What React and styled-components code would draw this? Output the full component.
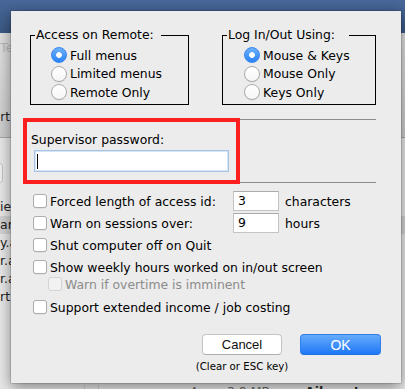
import React from 'react';
import styled, { createGlobalStyle } from 'styled-components';

const GlobalStyle = createGlobalStyle`
  html, body {
    margin: 0;
    padding: 0;
  }
  body {
    font-family: "DejaVu Sans", "Liberation Sans", sans-serif;
  }
`;

const Screen = styled.div`
  position: relative;
  width: 405px;
  height: 389px;
  overflow: hidden;
  display: flex;
  flex-direction: column;
  background: #e8e8e8;
`;

const TitleBar = styled.div`
  flex: none;
  height: 33px;
  background: linear-gradient(#49689a, #3b5884);
`;

const Toolbar = styled.div`
  flex: none;
  height: 105px;
  box-sizing: border-box;
  padding: 7px 0 12px;
  display: flex;
  flex-direction: column;
  justify-content: space-between;
  border-bottom: 1px solid #a8a8a8;
  background: linear-gradient(#e0e0e0, #cdcdcd);
  font-size: 12px;
`;

const ToolHint = styled.div`
  color: #b9b9b9;
  font-size: 13px;
  line-height: 16px;
`;

const ToolLabel = styled.div`
  width: 10px;
  display: flex;
  justify-content: flex-end;
  color: #1e1e1e;
  line-height: 15px;
  white-space: nowrap;
`;

const Body = styled.div`
  flex: 1;
  display: flex;
  flex-direction: column;
`;

const SearchBox = styled.div`
  margin: 24px 0 0 -60px;
  width: 63px;
  height: 22px;
  box-sizing: border-box;
  border: 1px solid #c3c3c3;
  border-radius: 5px;
  background: #f1f1f1;
`;

const List = styled.div`
  margin-top: 14px;
  display: flex;
  flex-direction: column;
`;

const ListRow = styled.div`
  height: 18px;
  line-height: 18px;
  font-size: 12.5px;
  color: #222;
  white-space: nowrap;
  background: ${p => (p.$selected ? '#d3d3d3' : 'transparent')};
`;

const StatusRow = styled.div`
  margin-top: auto;
  margin-bottom: -10px;
  height: 14px;
  display: flex;
  font-size: 12.5px;
  line-height: 14px;
  white-space: nowrap;
`;

const StatusCell = styled.div`
  flex: none;
  box-sizing: border-box;
  width: ${p => p.$w}px;
  padding-left: ${p => p.$pad || 0}px;
  border-right: ${p => (p.$divider ? '1px solid #cfcfcf' : 'none')};
  color: ${p => (p.$strong ? '#2a2a2a' : '#6a6a6a')};
  font-weight: ${p => (p.$strong ? 'bold' : 'normal')};
`;

const Sheet = styled.div`
  position: absolute;
  left: 11px;
  top: 11px;
  width: 390px;
  height: 372px;
  box-sizing: border-box;
  padding: 17px 0 0 19px;
  display: flex;
  flex-direction: column;
  background: #ececec;
  box-shadow: 0 4px 14px rgba(0, 0, 0, 0.45), 0 0 0 0.5px rgba(0, 0, 0, 0.25);
  font-size: 12.4px;
  color: #000;
`;

const Groups = styled.div`
  display: flex;
  gap: 33px;
`;

const Group = styled.fieldset`
  margin: 0;
  padding: 0;
  box-sizing: border-box;
  width: ${p => p.$w}px;
  min-inline-size: 0;
  height: 77px;
  border: 1px solid #000;
`;

const Legend = styled.legend`
  margin-left: 4px;
  padding: 0 ${p => p.$after}px 0 1px;
  line-height: 14px;
`;

const RadioList = styled.div`
  padding: 4px 0 0 ${p => p.$inset}px;
  display: flex;
  flex-direction: column;
`;

const RadioRow = styled.div`
  height: 18.5px;
  display: flex;
  align-items: center;
  gap: 3px;
  white-space: nowrap;
`;

const RadioDot = styled.span`
  flex: none;
  width: 16px;
  height: 16px;
  box-sizing: border-box;
  border-radius: 50%;
  border: 1px solid ${p => (p.$on ? '#3a86ee' : '#ababab')};
  background: ${p =>
    p.$on
      ? 'radial-gradient(circle, #fff 0 2.5px, transparent 3.2px), linear-gradient(#6cb2fb, #2a82f6)'
      : 'linear-gradient(#ffffff, #f6f6f6)'};
  box-shadow: ${p => (p.$on ? 'none' : '0 0.5px 0.5px rgba(0,0,0,0.12)')};
`;

const Separator = styled.div`
  width: 346px;
  height: 1px;
  flex: none;
  margin-top: ${p => p.$top || 0}px;
  background: #8d8d8d;
`;

const PasswordSection = styled.div`
  position: relative;
  height: 62px;
  box-sizing: border-box;
  padding: 12px 0 0 1px;
`;

const Highlight = styled.div`
  position: absolute;
  left: -7px;
  top: -2px;
  width: 217px;
  height: 66px;
  box-sizing: border-box;
  border: 4px solid #fb1f1f;
  pointer-events: none;
`;

const FieldLabel = styled.div`
  line-height: 15px;
`;

const PasswordBox = styled.div`
  margin: 3px 0 0 3px;
  width: 195px;
  height: 22px;
  box-sizing: border-box;
  display: flex;
  align-items: center;
  padding-left: 2px;
  background: #fff;
  border: 1px solid #a6c4e6;
  box-shadow: inset 0 0 0 1px #d6e4f3;
`;

const Caret = styled.span`
  width: 1px;
  height: 15px;
  background: #000;
`;

const CheckList = styled.div`
  padding: 8px 0 0 3px;
  display: flex;
  flex-direction: column;
`;

const CheckRow = styled.div`
  display: flex;
  align-items: center;
  height: ${p => (p.$sub ? 14 : 20)}px;
  margin-top: ${p => p.$gap}px;
  padding-left: ${p => (p.$sub ? 15 : 0)}px;
  white-space: nowrap;
  color: ${p => (p.$disabled ? '#8b8b8b' : '#000')};
`;

const CheckBox = styled.span`
  flex: none;
  width: 14px;
  height: 14px;
  box-sizing: border-box;
  margin-right: 3px;
  border-radius: 3px;
  border: 1px solid ${p => (p.$disabled ? '#d4d4d4' : '#adadad')};
  background: ${p => (p.$disabled ? '#f2f2f2' : '#fff')};
  box-shadow: ${p => (p.$disabled ? 'none' : '0 0.5px 0.5px rgba(0,0,0,0.1)')};
`;

const CheckText = styled.span`
  width: ${p => (p.$w ? `${p.$w}px` : 'auto')};
  flex: none;
`;

const NumberField = styled.div`
  width: 46px;
  height: 20px;
  box-sizing: border-box;
  padding-left: 4px;
  line-height: 18px;
  background: #fff;
  border: 1px solid #c4c4c4;
  border-top-color: #ababab;
  margin-right: 6px;
`;

const Footer = styled.div`
  margin-top: 17px;
  padding-right: 20px;
  display: flex;
  justify-content: flex-end;
  align-items: flex-start;
  gap: 18px;
`;

const ButtonColumn = styled.div`
  width: 80px;
  display: flex;
  flex-direction: column;
  align-items: center;
`;

const Button = styled.div`
  width: ${p => p.$w}px;
  height: 21px;
  box-sizing: border-box;
  display: flex;
  align-items: center;
  justify-content: center;
  border-radius: 4px;
  font-family: "Liberation Sans", Arial, sans-serif;
  font-size: ${p => (p.$primary ? 14 : 13)}px;
  color: ${p => (p.$primary ? '#fff' : '#111')};
  border: 1px solid ${p => (p.$primary ? '#2f7fee' : '#c4c4c4')};
  border-bottom-color: ${p => (p.$primary ? '#1f6fe0' : '#aeaeae')};
  background: ${p => (p.$primary ? 'linear-gradient(#66abfc, #1f78f5)' : '#fff')};
`;

const Hint = styled.div`
  margin-top: 5px;
  white-space: nowrap;
  font-size: 10.2px;
  line-height: 13px;
`;

const remoteOptions = [
  { label: 'Full menus', on: true },
  { label: 'Limited menus' },
  { label: 'Remote Only' },
];

const loginOptions = [
  { label: 'Mouse & Keys', on: true },
  { label: 'Mouse Only' },
  { label: 'Keys Only' },
];

const listItems = ['iew', 'arch', 'y.app', 'r.app', 'r.app', 'rt (1'];

const RadioGroup = ({ title, options, width, inset, after }) => (
  <Group $w={width}>
    <Legend $after={after}>{title}</Legend>
    <RadioList $inset={inset}>
      {options.map(o => (
        <RadioRow key={o.label}>
          <RadioDot $on={o.on} />
          {o.label}
        </RadioRow>
      ))}
    </RadioList>
  </Group>
);

const App = () => (
  <>
    <GlobalStyle />
    <Screen>
      <TitleBar />
      <Toolbar>
        <ToolHint>Test</ToolHint>
        <ToolLabel>Chart</ToolLabel>
      </Toolbar>
      <Body>
        <SearchBox />
        <List>
          {listItems.map((t, i) => (
            <ListRow key={i} $selected={i === 1}>{t}</ListRow>
          ))}
        </List>
        <StatusRow>
          <StatusCell $w={85} $divider />
          <StatusCell $w={14} $divider />
          <StatusCell $w={206} $pad={91}>App - 3.8 MB</StatusCell>
          <StatusCell $w={100} $strong>Ailment</StatusCell>
        </StatusRow>
      </Body>

      <Sheet>
        <Groups>
          <RadioGroup title="Access on Remote:" options={remoteOptions} width={159} inset={20} after={7} />
          <RadioGroup title="Log In/Out Using:" options={loginOptions} width={154} inset={21} after={14} />
        </Groups>

        <Separator $top={14} />
        <PasswordSection>
          <FieldLabel>Supervisor password:</FieldLabel>
          <PasswordBox>
            <Caret />
          </PasswordBox>
          <Highlight />
        </PasswordSection>
        <Separator />

        <CheckList>
          <CheckRow $gap={0}>
            <CheckBox />
            <CheckText $w={183}>Forced length of access id:</CheckText>
            <NumberField>3</NumberField>
            characters
          </CheckRow>
          <CheckRow $gap={2}>
            <CheckBox />
            <CheckText $w={183}>Warn on sessions over:</CheckText>
            <NumberField>9</NumberField>
            hours
          </CheckRow>
          <CheckRow $gap={2}>
            <CheckBox />
            <CheckText>Shut computer off on Quit</CheckText>
          </CheckRow>
          <CheckRow $gap={2}>
            <CheckBox />
            <CheckText>Show weekly hours worked on in/out screen</CheckText>
          </CheckRow>
          <CheckRow $gap={0} $sub $disabled>
            <CheckBox $disabled />
            <CheckText>Warn if overtime is imminent</CheckText>
          </CheckRow>
          <CheckRow $gap={6}>
            <CheckBox />
            <CheckText>Support extended income / job costing</CheckText>
          </CheckRow>
        </CheckList>

        <Footer>
          <ButtonColumn>
            <Button $w={80}>Cancel</Button>
            <Hint>(Clear or ESC key)</Hint>
          </ButtonColumn>
          <Button $w={81} $primary>OK</Button>
        </Footer>
      </Sheet>
    </Screen>
  </>
);

export default App;
